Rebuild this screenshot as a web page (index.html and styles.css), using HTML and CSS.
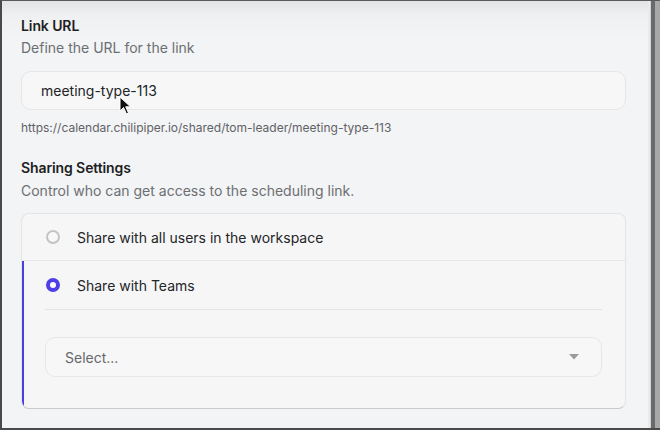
FILE: index.html
```html
<!DOCTYPE html>
<html>
<head>
<meta charset="utf-8">
<link rel="stylesheet" href="styles.css">
</head>
<body>
<div class="frame">
  <main class="page">
    <section class="field">
      <h2 class="title">Link URL</h2>
      <p class="desc">Define the URL for the link</p>
      <div class="input">
        <span class="input-text">meeting-type-113</span>
        <svg class="cursor" width="14" height="20" viewBox="0 0 14 20"><path d="M1 1 L1 15 L4.5 11.5 L7.5 18 L9.5 17 L6.7 10.8 L11.5 10.8 Z" fill="#111" stroke="#fff" stroke-width="1"/></svg>
      </div>
      <p class="hint">https://calendar.chilipiper.io/shared/tom-leader/meeting-type-113</p>
    </section>
    <section class="field sharing">
      <h2 class="title">Sharing Settings</h2>
      <p class="desc desc-share">Control who can get access to the scheduling link.</p>
      <div class="card">
        <div class="option">
          <span class="radio"></span>
          <span class="label">Share with all users in the workspace</span>
        </div>
        <div class="option selected">
          <div class="option-head">
            <span class="radio on"></span>
            <span class="label">Share with Teams</span>
          </div>
          <div class="divider"></div>
          <div class="select">
            <span class="placeholder">Select...</span>
            <svg class="caret" width="10" height="6" viewBox="0 0 10 6"><path d="M0 0 H10 L5 5.5 Z" fill="#9a9a9a"/></svg>
          </div>
        </div>
      </div>
    </section>
  </main>
  <div class="scrollbar"></div>
</div>
</body>
</html>
```
FILE: styles.css
```css
html, body {
  margin: 0;
  padding: 0;
}
body {
  width: 660px;
  height: 430px;
  overflow: hidden;
  font-family: Inter, "Liberation Sans", sans-serif;
  background: #3c3c3c;
}
.frame {
  box-sizing: border-box;
  width: 660px;
  height: 430px;
  border-left: 2px solid #4a4a4a;
  border-top: 1px solid #5a5a5a;
  border-bottom: 2px solid #4a4a4a;
  display: flex;
  background: linear-gradient(#e2e3e4 0px, #eff0f1 14px, #f3f4f5 40px);
}
.page {
  flex: 1;
  padding: 16px 22px 0 19px;
  box-sizing: border-box;
}
.scrollbar {
  width: 12px;
  background: linear-gradient(90deg, #e9eaeb 0 2px, #d4d5d6 2px 3px, #6a6a6a 3px 7px, #a8a8a8 7px);
}
.title {
  margin: 0;
  font-size: 14px;
  font-weight: 600;
  line-height: 18px;
  color: #1c1f23;
  letter-spacing: -0.1px;
}
.desc {
  margin: 4px 0 0;
  font-size: 14px;
  line-height: 18px;
  color: #6c6f73;
}
.desc-share {
  margin-top: 5px;
}
.input {
  position: relative;
  margin-top: 14px;
  height: 39px;
  box-sizing: border-box;
  border: 1px solid #e6e6e7;
  border-radius: 10px;
  background: #f7f7f8;
  display: flex;
  align-items: center;
  padding-left: 19px;
}
.input-text {
  font-size: 14px;
  color: #212326;
}
.cursor {
  position: absolute;
  left: 97px;
  top: 24px;
}
.hint {
  margin: 10px 0 0;
  font-size: 12px;
  line-height: 16px;
  color: #5f6266;
}
.sharing {
  margin-top: 23px;
}
.card {
  margin-top: 13px;
  border: 1px solid #e4e4e5;
  border-bottom-color: #c9cacb;
  border-radius: 8px;
  background: #f6f6f7;
  overflow: hidden;
}
.option {
  display: flex;
  align-items: center;
  height: 46px;
  padding-left: 24px;
  border-bottom: 1px solid #e7e7e8;
  gap: 17px;
}
.option.selected {
  display: block;
  height: auto;
  border-bottom: none;
  border-left: 2px solid #4a3fe0;
  padding: 0 23px 31px 21px;
}
.option-head {
  display: flex;
  align-items: center;
  height: 48px;
  gap: 17px;
  padding-left: 1px;
}
.radio {
  width: 14px;
  height: 14px;
  box-sizing: border-box;
  border: 2px solid #c4c4c5;
  border-radius: 50%;
  background: #f8f8f8;
  flex: none;
}
.radio.on {
  border: 4px solid #4f3fe6;
  background: #fff;
}
.label {
  font-size: 14px;
  color: #232528;
}
.divider {
  height: 1px;
  background: #e4e4e5;
}
.select {
  margin-top: 27px;
  height: 40px;
  box-sizing: border-box;
  border: 1px solid #e6e6e7;
  border-radius: 10px;
  background: #f7f7f8;
  display: flex;
  align-items: center;
  justify-content: space-between;
  padding: 0 22px 0 19px;
}
.placeholder {
  font-size: 14px;
  color: #66686b;
}
```
